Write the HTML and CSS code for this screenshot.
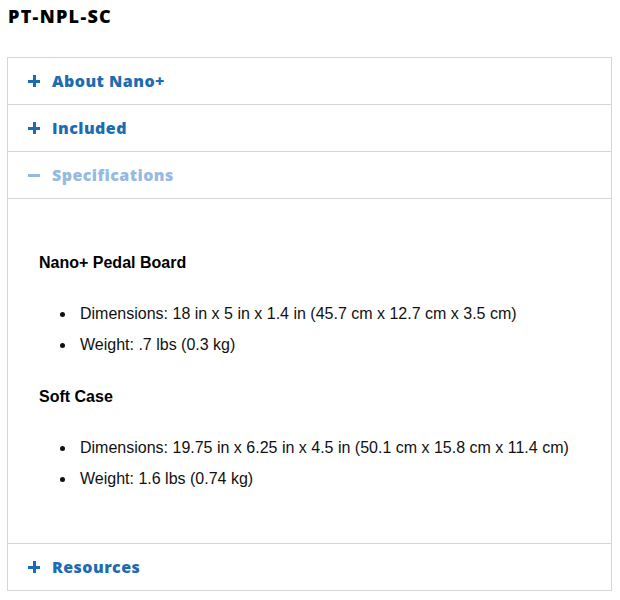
FILE: index.html
```html
<!DOCTYPE html>
<html>
<head>
<meta charset="utf-8">
<link rel="stylesheet" href="styles.css">
</head>
<body>
<div class="page">
  <h1 class="title">PT-NPL-SC</h1>
  <div class="accordion">
    <div class="item">
      <div class="header"><span class="icon plus"></span><span class="label">About Nano+</span></div>
    </div>
    <div class="item">
      <div class="header"><span class="icon plus"></span><span class="label">Included</span></div>
    </div>
    <div class="item open">
      <div class="header"><span class="icon minus"></span><span class="label">Specifications</span></div>
      <div class="body">
        <h4 class="sub">Nano+ Pedal Board</h4>
        <ul class="list">
          <li>Dimensions: 18 in x 5 in x 1.4 in (45.7 cm x 12.7 cm x 3.5 cm)</li>
          <li>Weight: .7 lbs (0.3 kg)</li>
        </ul>
        <h4 class="sub">Soft Case</h4>
        <ul class="list">
          <li>Dimensions: 19.75 in x 6.25 in x 4.5 in (50.1 cm x 15.8 cm x 11.4 cm)</li>
          <li>Weight: 1.6 lbs (0.74 kg)</li>
        </ul>
      </div>
    </div>
    <div class="item">
      <div class="header"><span class="icon plus"></span><span class="label">Resources</span></div>
    </div>
  </div>
</div>
</body>
</html>
```

FILE: styles.css
```css
html, body {
  margin: 0;
  padding: 0;
  background: #ffffff;
}
.page {
  padding: 0 8px 0 7px;
}
.title {
  margin: 0;
  padding: 5px 0 0 1px;
  height: 57px;
  box-sizing: border-box;
  font-family: "Open Sans", "DejaVu Sans", sans-serif;
  font-weight: 800;
  font-size: 18px;
  line-height: 22px;
  letter-spacing: 1.3px;
  color: #000;
}
.accordion {
  border: 1px solid #d6d6d6;
}
.item + .item {
  border-top: 1px solid #d6d6d6;
}
.header {
  height: 46px;
  display: flex;
  align-items: center;
  padding-left: 20px;
  gap: 12px;
  font-family: "Open Sans", "DejaVu Sans", sans-serif;
  font-weight: 800;
  font-size: 16px;
  color: #1d6cb1;
}
.label {
  letter-spacing: 0.45px;
}
.icon {
  position: relative;
  width: 12px;
  height: 12px;
  flex: none;
}
.icon::before,
.icon::after {
  content: "";
  position: absolute;
  background: currentColor;
}
.icon::before {
  left: 0;
  top: 5px;
  width: 12px;
  height: 3px;
}
.plus::after {
  left: 4.5px;
  top: 0;
  width: 3px;
  height: 12px;
}
.minus::after {
  display: none;
}
.open .header {
  color: #94b9e3;
}
.body {
  border-top: 1px solid #d6d6d6;
  padding: 54px 31px 54px;
  font-family: "Liberation Sans", Arial, sans-serif;
  font-size: 16px;
  color: #111;
}
.sub {
  margin: 0;
  font-size: 16px;
  line-height: 20px;
  font-weight: bold;
  color: #000;
}
.list {
  margin: 31px 0 32px;
  padding-left: 41px;
  list-style: none;
  display: flex;
  flex-direction: column;
  gap: 11px;
}
.list:last-child {
  margin-bottom: 0;
}
.list li {
  line-height: 20px;
  position: relative;
}
.list li::before {
  content: "";
  position: absolute;
  left: -20px;
  top: 8px;
  width: 5px;
  height: 5px;
  border-radius: 50%;
  background: #111;
}
```
